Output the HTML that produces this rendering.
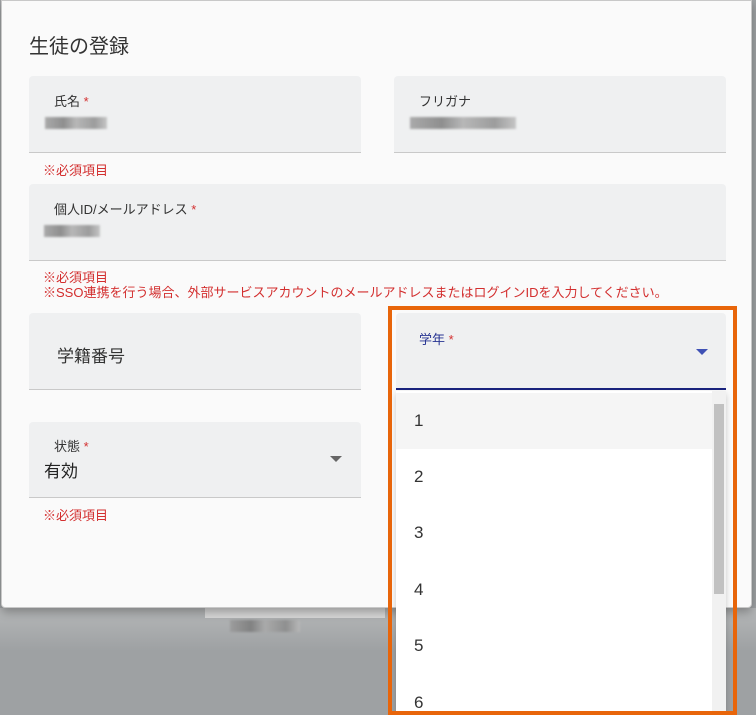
<!DOCTYPE html>
<html><head><meta charset="utf-8"><style>
*{margin:0;padding:0;box-sizing:border-box}
body{width:756px;height:715px;overflow:hidden;position:relative;background:#9fa2a4;font-family:"Liberation Sans","Noto Sans CJK JP",sans-serif;color:#333}
.a{position:absolute}
.dlg{left:1px;top:0;width:751px;height:608px;background:#fafafa;border:1px solid #c8c8c8;border-radius:0 0 4px 4px;box-shadow:0 4px 10px rgba(0,0,0,.3)}
.f{position:absolute;background:#eff0f1;border-bottom:1px solid #c9c9c9;border-radius:4px 4px 0 0}
.lab{position:absolute;font-size:13px;color:#333}
.lab i{color:#d32f2f;font-style:normal}
.err{position:absolute;font-size:13px;color:#d32f2f;line-height:15px}
.blur{position:absolute;height:12px;background:linear-gradient(90deg,#999,#777 30%,#aaa 50%,#888 80%,#bbb);opacity:.8;filter:blur(1px)}
.opt{position:absolute;left:0;width:316px;height:56px;font-size:17px;padding:18px 0 0 18px;color:#333}
</style></head><body>
<div class="a" style="left:0;top:608px;width:756px;height:107px;background:linear-gradient(#b5b7b8,#9ea1a3 40%)"></div>
<div class="a" style="left:205px;top:608px;width:180px;height:10px;background:#d8d8d8"></div>
<div class="blur" style="left:230px;top:620px;width:70px;height:12px"></div>
<div class="a dlg"></div>
<div class="a" style="left:29px;top:30px;font-size:20px;color:#333">生徒の登録</div>
<div class="f" style="left:29px;top:76px;width:332px;height:77px"></div>
<div class="lab" style="left:54px;top:91px">氏名 <i>*</i></div>
<div class="blur" style="left:45px;top:117px;width:62px"></div>
<div class="f" style="left:394px;top:76px;width:332px;height:77px"></div>
<div class="lab" style="left:419px;top:91px">フリガナ</div>
<div class="blur" style="left:410px;top:117px;width:106px"></div>
<div class="err" style="left:43px;top:163px">※必須項目</div>
<div class="f" style="left:29px;top:184px;width:697px;height:77px"></div>
<div class="lab" style="left:54px;top:199px">個人ID/メールアドレス <i>*</i></div>
<div class="blur" style="left:44px;top:225px;width:56px"></div>
<div class="err" style="left:43px;top:270px">※必須項目<br>※SSO連携を行う場合、外部サービスアカウントのメールアドレスまたはログインIDを入力してください。</div>
<div class="f" style="left:29px;top:313px;width:332px;height:77px"></div>
<div class="a" style="left:57px;top:342px;font-size:17px;color:#333">学籍番号</div>
<div class="f" style="left:29px;top:422px;width:332px;height:76px"></div>
<div class="lab" style="left:54px;top:436px">状態 <i>*</i></div>
<div class="a" style="left:44px;top:457px;font-size:17px;color:#222">有効</div>
<div class="a" style="left:330px;top:456px;width:0;height:0;border-left:6px solid transparent;border-right:6px solid transparent;border-top:6px solid #666"></div>
<div class="err" style="left:43px;top:508px">※必須項目</div>
<div class="a" style="left:396px;top:313px;width:330px;height:77px;background:#eff0f1;border-bottom:2px solid #1a237e;border-radius:4px 4px 0 0"></div>
<div class="lab" style="left:419px;top:329px;color:#283593">学年 <i>*</i></div>
<div class="a" style="left:696px;top:349px;width:0;height:0;border-left:6px solid transparent;border-right:6px solid transparent;border-top:6px solid #3f51b5"></div>
<div class="a" style="left:396px;top:391px;width:330px;height:322px;background:#fff;overflow:hidden;box-shadow:0 3px 6px rgba(0,0,0,.2)">
<div class="opt" style="top:2px;background:#f5f5f5">1</div>
<div class="opt" style="top:58px">2</div>
<div class="opt" style="top:114px">3</div>
<div class="opt" style="top:171px">4</div>
<div class="opt" style="top:227px">5</div>
<div class="opt" style="top:284px">6</div>
<div class="a" style="left:316px;top:0;width:14px;height:322px;background:#f1f1f1"></div>
<div class="a" style="left:318px;top:13px;width:10px;height:190px;background:#c1c1c1"></div>
</div>
<div class="a" style="left:388px;top:306px;width:349px;height:409px;border:4px solid #e8650a"></div>
</body></html>
